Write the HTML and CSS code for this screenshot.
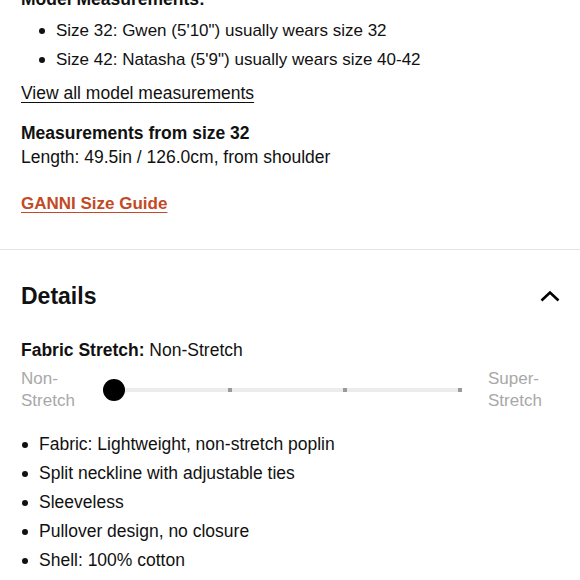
FILE: index.html
```html
<!DOCTYPE html>
<html>
<head>
<meta charset="utf-8">
<link rel="stylesheet" href="styles.css">
</head>
<body>
<div class="page">
  <section class="sizing">
    <h3 class="model-head">Model Measurements:</h3>
    <ul class="model-list">
      <li>Size 32: Gwen (5'10") usually wears size 32</li>
      <li>Size 42: Natasha (5'9") usually wears size 40-42</li>
    </ul>
    <a class="view-all">View all model measurements</a>
    <div class="measure">
      <div class="measure-title">Measurements from size 32</div>
      <div class="measure-text">Length: 49.5in / 126.0cm, from shoulder</div>
    </div>
    <a class="guide">GANNI Size Guide</a>
  </section>
  <hr class="divider">
  <section class="details">
    <div class="details-head">
      <h2>Details</h2>
      <svg class="chev" width="22" height="14" viewBox="0 0 22 14"><path d="M2.5 11.5 L11 3.5 L19.5 11.5" fill="none" stroke="#000" stroke-width="2.6"/></svg>
    </div>
    <div class="stretch-label"><b>Fabric Stretch:</b> Non-Stretch</div>
    <div class="slider">
      <div class="end">Non-<br>Stretch</div>
      <div class="track">
        <span class="knob"></span>
        <span class="tick t1"></span>
        <span class="tick t2"></span>
        <span class="tick t3"></span>
      </div>
      <div class="end end-r">Super-<br>Stretch</div>
    </div>
    <ul class="detail-list">
      <li>Fabric: Lightweight, non-stretch poplin</li>
      <li>Split neckline with adjustable ties</li>
      <li>Sleeveless</li>
      <li>Pullover design, no closure</li>
      <li>Shell: 100% cotton</li>
    </ul>
  </section>
</div>
</body>
</html>
```

FILE: styles.css
```css
* { box-sizing: border-box; }
html, body { margin: 0; padding: 0; background: #fff; }
body {
  font-family: "Liberation Sans", Arial, sans-serif;
  color: #111;
  font-size: 17.5px;
  overflow: hidden;
}
.page { width: 580px; }
.sizing { padding: 0 21px; }
.model-head {
  margin: -12px 0 0;
  font-size: 17.5px;
  line-height: 22px;
  font-weight: bold;
}
.model-list {
  margin: 6px 0 0;
  padding: 0 0 0 35px;
  list-style: none;
  font-size: 17px;
}
.model-list li, .detail-list li {
  position: relative;
  line-height: 29px;
}
.model-list li::before, .detail-list li::before {
  content: "";
  position: absolute;
  left: -17px;
  top: 12px;
  width: 6px;
  height: 6px;
  border-radius: 50%;
  background: #111;
}
.view-all {
  display: block;
  margin-top: 7px;
  line-height: 24px;
  text-decoration: underline;
  text-underline-offset: 3px;
  color: #111;
}
.measure { margin-top: 16px; line-height: 24px; }
.measure-title { font-weight: bold; }
.guide {
  display: block;
  margin-top: 23px;
  line-height: 24px;
  color: #c24a26;
  font-weight: bold;
  font-size: 17px;
  text-decoration: underline;
  text-underline-offset: 3px;
}
.divider {
  margin: 33px 0 0;
  border: 0;
  border-top: 1px solid #e3e3e3;
}
.details { padding: 0 21px; }
.details-head {
  display: flex;
  justify-content: space-between;
  align-items: center;
  margin-top: 31px;
  height: 30px;
}
.details-head h2 {
  margin: 0;
  font-size: 23px;
  font-weight: bold;
}
.chev { margin-right: -2px; }
.stretch-label {
  margin-top: 28px;
  font-size: 17.5px;
  line-height: 22px;
}
.slider {
  display: flex;
  align-items: center;
  margin-top: 7px;
}
.end {
  color: #a8a8a8;
  font-size: 17px;
  line-height: 22px;
  width: 82px;
}
.end-r { width: auto; margin-left: 29px; }
.track {
  position: relative;
  width: 356px;
  height: 4px;
  background: #ececec;
}
.knob {
  position: absolute;
  left: 0;
  top: -9px;
  width: 22px;
  height: 22px;
  border-radius: 50%;
  background: #000;
}
.tick {
  position: absolute;
  top: 0;
  width: 4px;
  height: 4px;
  background: #9a9a9a;
}
.t1 { left: 125px; }
.t2 { left: 240px; }
.t3 { left: 355px; }
.detail-list {
  margin: 18px 0 0;
  padding: 0 0 0 18px;
  list-style: none;
}
```
